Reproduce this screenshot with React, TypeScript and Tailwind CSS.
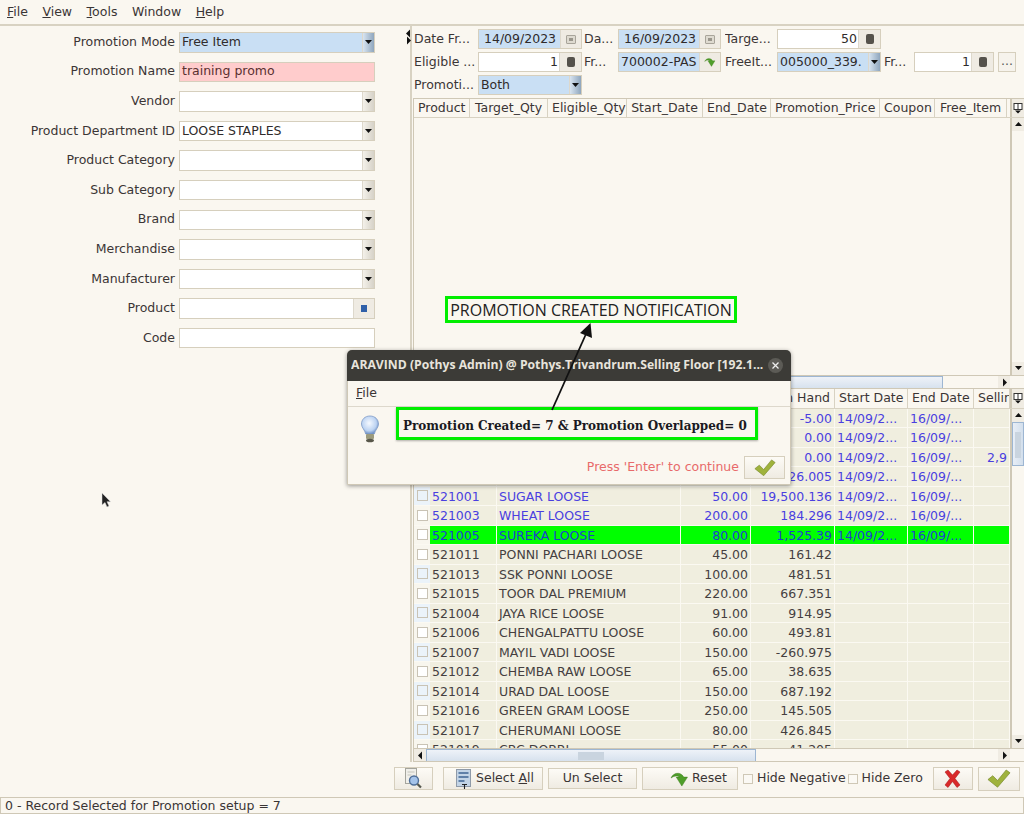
import React from "react";

const font = { fontFamily: '"DejaVu Sans", sans-serif' };

function Caret({ dir = "down" }: { dir?: "down" | "up" | "left" | "right" }) {
  const pts = { down: "1,2 8,2 4.5,6", up: "1,6 8,6 4.5,2", left: "6,0.5 6,8.5 2,4.5", right: "3,0.5 3,8.5 7,4.5" }[dir];
  return (
    <svg width="9" height="9" viewBox="0 0 9 9" className="shrink-0">
      <polygon points={pts} fill="#111" />
    </svg>
  );
}

function Spin() {
  return (
    <div className="w-[22px] h-full shrink-0 bg-[#efebe3] border-l border-[#ddd8cc] flex items-center justify-center">
      <div className="w-[8px] h-[10px] rounded-[2px] bg-[#55524c]" />
    </div>
  );
}

function FormRow({ label, children }: { label: string; children: React.ReactNode }) {
  return (
    <div className="flex items-center h-[20.5px] mb-[9.1px]">
      <div className="w-[175px] text-right text-[#3a3535] whitespace-nowrap">{label}</div>
      <div className="ml-[4px] w-[196px] h-full">{children}</div>
    </div>
  );
}

function Field({ value = "", bg = "bg-white", children, tx = "text-[#2f2b2b]", pad = "pl-[2px]" }: { value?: string; bg?: string; children?: React.ReactNode; tx?: string; pad?: string }) {
  return (
    <div className={`flex h-full border border-[#d6cfbd] ${bg}`}>
      <div className={`flex-1 min-w-0 flex items-center whitespace-nowrap overflow-hidden ${pad} ${tx}`}>{value}</div>
      {children}
    </div>
  );
}

function DropBtn({ blue = false }: { blue?: boolean }) {
  return (
    <div className={`w-[12px] h-full shrink-0 flex items-center justify-center border-l border-[#ddd8cc] ${blue ? "bg-gradient-to-r from-[#d8e4f0] to-[#8fa6bd]" : "bg-gradient-to-r from-[#f4f1ea] to-[#d6d2c8]"}`}>
      <Caret />
    </div>
  );
}

function Combo({ value = "", blue = false }: { value?: string; blue?: boolean }) {
  return (
    <Field value={value} bg={blue ? "bg-[#c9dff4]" : "bg-white"}>
      <DropBtn blue={blue} />
    </Field>
  );
}

const FRow = ({ children }: { children: React.ReactNode }) => (
  <div className="flex items-center h-[20px] mb-[3px]">{children}</div>
);

function TLabel({ w, children }: { w: number; children: React.ReactNode }) {
  return (
    <div className="text-[#3a3535] whitespace-nowrap overflow-hidden shrink-0" style={{ width: w }}>
      {children}
    </div>
  );
}

function Box({ w, children }: { w: number; children: React.ReactNode }) {
  return (
    <div className="h-[20px] shrink-0" style={{ width: w }}>
      {children}
    </div>
  );
}

function CalBtn() {
  return (
    <div className="w-[21px] h-full shrink-0 bg-[#efebe3] border-l border-[#ddd8cc] flex items-center justify-center">
      <div className="w-[10px] h-[9px] rounded-[1px] border border-[#a8a49a] bg-[#dedad0] flex items-center justify-center">
        <div className="w-[4px] h-[3px] bg-[#9a968c]" />
      </div>
    </div>
  );
}

function NumField({ value }: { value: string }) {
  return (
    <div className="flex h-full border border-[#d6cfbd] bg-white">
      <div className="flex-1 text-right pr-[1px] leading-[18px] text-[#2f2b2b]">{value}</div>
      <Spin />
    </div>
  );
}

function Scrollbar({ thumbTop, thumbH, grip = false }: { thumbTop: number; thumbH: number; grip?: boolean }) {
  return (
    <div className="w-[14px] h-full shrink-0 flex flex-col bg-[#faf7f0] border-l-2 border-[#cfc8b6]">
      <div className="h-[13px] flex items-center justify-center bg-[#f0ece3]">
        <Caret dir="up" />
      </div>
      <div className="flex-1 relative">
        {thumbH > 0 && (
          <div
            className="absolute left-0 right-0 bg-gradient-to-r from-[#e8eef6] to-[#d3dfec] border border-[#9db6d2]"
            style={{ top: thumbTop, height: thumbH }}
          >
            {grip && <div className="mx-[2px] mt-[9px] h-[26px] bg-[#c9d4df]" />}
          </div>
        )}
      </div>
      <div className="h-[13px] flex items-center justify-center bg-[#f0ece3]">
        <Caret />
      </div>
    </div>
  );
}

function HScroll({ left, w, grip = false }: { left: number; w: number; grip?: boolean }) {
  return (
    <div className="h-[14px] shrink-0 flex items-stretch bg-[#faf7f0] border-t border-b border-[#cfc8b6]">
      <div className="w-[12px] flex items-center justify-center bg-[#f0ece3]">
        <Caret dir="left" />
      </div>
      <div className="flex-1 relative">
        <div
          className="absolute top-0 bottom-0 bg-gradient-to-b from-[#eef2f8] to-[#d7e2ee] border-x border-[#9db6d2] border-t flex items-center justify-center"
          style={{ left, width: w }}
        >
          {grip && <div className="w-[26px] h-[8px] bg-[#c9d4df]" />}
        </div>
      </div>
      <div className="w-[12px] flex items-center justify-center bg-[#f0ece3]">
        <Caret dir="right" />
      </div>
      <div className="w-[14px] bg-[#faf7f0]" />
    </div>
  );
}

const topCols: [string, number][] = [
  ["Product", 56],
  ["Target_Qty", 78],
  ["Eligible_Qty", 79],
  ["Start_Date", 76],
  ["End_Date", 68],
  ["Promotion_Price", 109],
  ["Coupon", 55],
  ["Free_Item", 72],
];

const cols = [16, 67, 184, 70, 84, 73, 66, 36];
type R = { c?: string; n?: string; p?: string; h: string; b?: boolean; g?: boolean; s?: string; t?: boolean };
const rows: R[] = [
  { h: "-5.00", b: true },
  { h: "0.00", b: true },
  { h: "0.00", b: true, s: "2,9" },
  { h: "26.005", b: true },
  { c: "521001", n: "SUGAR LOOSE", p: "50.00", h: "19,500.136", b: true, t: true },
  { c: "521003", n: "WHEAT LOOSE", p: "200.00", h: "184.296", b: true },
  { c: "521005", n: "SUREKA LOOSE", p: "80.00", h: "1,525.39", b: true, g: true },
  { c: "521011", n: "PONNI PACHARI LOOSE", p: "45.00", h: "161.42" },
  { c: "521013", n: "SSK PONNI LOOSE", p: "100.00", h: "481.51", t: true },
  { c: "521015", n: "TOOR DAL PREMIUM", p: "220.00", h: "667.351" },
  { c: "521004", n: "JAYA RICE LOOSE", p: "91.00", h: "914.95", t: true },
  { c: "521006", n: "CHENGALPATTU LOOSE", p: "60.00", h: "493.81" },
  { c: "521007", n: "MAYIL VADI LOOSE", p: "150.00", h: "-260.975", t: true },
  { c: "521012", n: "CHEMBA RAW LOOSE", p: "65.00", h: "38.635" },
  { c: "521014", n: "URAD DAL LOOSE", p: "150.00", h: "687.192", t: true },
  { c: "521016", n: "GREEN GRAM LOOSE", p: "250.00", h: "145.505" },
  { c: "521017", n: "CHERUMANI LOOSE", p: "80.00", h: "426.845", t: true },
  { c: "521019", n: "CBC DOBBI", p: "55.00", h: "41.205" },
];

function Cell({ w, right, children }: { w: number; right?: boolean; children?: React.ReactNode }) {
  return (
    <div
      className={`shrink-0 h-full border-r border-[#fbf9f2] px-[2px] overflow-hidden whitespace-nowrap leading-[19px] ${right ? "text-right" : ""}`}
      style={{ width: w }}
    >
      {children}
    </div>
  );
}

function Row({ r }: { r: R }) {
  const tx = r.b ? (r.g ? "text-[#1c3fd0]" : "text-[#4a3fe0]") : "text-[#453f3f]";
  return (
    <div className={`flex h-[19.5px] border-b border-[#fbf9f2] ${tx} ${r.g ? "bg-[#00ff00]" : ""}`}>
      <div className={`shrink-0 flex items-center justify-center ${r.t ? "bg-[#ebf3fa]" : "bg-[#f8f6ee]"}`} style={{ width: cols[0] }}>
        <div className={`w-[11px] h-[11px] border border-[#c9c3b5] ${r.t ? "bg-[#ebf3fa]" : "bg-white"}`} />
      </div>
      <Cell w={cols[1]}>{r.c}</Cell>
      <Cell w={cols[2]}>{r.n}</Cell>
      <Cell w={cols[3]} right>{r.p}</Cell>
      <Cell w={cols[4]} right>{r.h}</Cell>
      <Cell w={cols[5]}>{r.b ? "14/09/2..." : ""}</Cell>
      <Cell w={cols[6]}>{r.b ? "16/09/..." : ""}</Cell>
      <Cell w={cols[7]} right>{r.s}</Cell>
    </div>
  );
}

function Head({ w, children, right }: { w: number; children: React.ReactNode; right?: boolean }) {
  return (
    <div
      className={`shrink-0 h-full border-r border-[#d8d2c2] px-[4px] text-[#3a3535] leading-[18px] whitespace-nowrap overflow-hidden ${right ? "text-right" : "text-center"}`}
      style={{ width: w }}
    >
      {children}
    </div>
  );
}

function ColMenu() {
  return (
    <div className="w-[14px] h-full shrink-0 bg-[#f0ece3] border-l-2 border-[#cfc8b6] flex items-center justify-center">
      <svg width="10" height="11" viewBox="0 0 10 11">
        <rect x="1" y="0.5" width="8" height="6" fill="#fff" stroke="#333" />
        <line x1="5" y1="0.5" x2="5" y2="6.5" stroke="#333" />
        <polygon points="2,7.5 8,7.5 5,10.5" fill="#111" />
      </svg>
    </div>
  );
}

function Check({ size = 26 }: { size?: number }) {
  return (
    <svg width={size} height={size * 0.8} viewBox="0 0 25 20">
      <polygon points="1,11 6,7 11,12 20,1 24,4 11,19" fill="#9fb23c" stroke="#76882a" strokeWidth="0.7" />
    </svg>
  );
}

function Btn({ w, children, className = "" }: { w: number; children: React.ReactNode; className?: string }) {
  return (
    <div
      className={`shrink-0 border border-[#d6cfbd] bg-gradient-to-b from-[#fdfbf6] to-[#efebe2] flex items-center text-[#3a3535] ${className}`}
      style={{ width: w }}
    >
      {children}
    </div>
  );
}

function CurvedArrow({ w, h }: { w: number; h: number }) {
  return (
    <svg width={w} height={h} viewBox="0 0 20 17" className="shrink-0">
      <path d="M1 7.500C3 2 11 0 14.500 6.500L18.500 6.500 12.500 16 6.500 6.500 10 6.500C8 4.500 4 5 1 7.500Z" fill="#4f9e2a" stroke="#3a7a1a" strokeWidth="0.500" />
    </svg>
  );
}

function Bulb() {
  return (
    <svg width="20" height="28" viewBox="0 0 20 28">
      <defs>
        <radialGradient id="bulb" cx="45%" cy="40%" r="60%">
          <stop offset="0%" stopColor="#f5f9ff" />
          <stop offset="70%" stopColor="#bcd3f2" />
          <stop offset="100%" stopColor="#6d8fc4" />
        </radialGradient>
      </defs>
      <path d="M10 1C4.8 1 1.5 4.6 1.5 9c0 3.6 3.4 6 4.2 10h8.6c.8-4 4.2-6.4 4.2-10C18.500 4.600 15.200 1 10 1z" fill="url(#bulb)" stroke="#7f9ac6" strokeWidth="0.8" />
      <rect x="6" y="19" width="8" height="5" rx="1" fill="#9b9a7c" />
      <ellipse cx="10" cy="25.500" rx="4" ry="1.800" fill="#57564a" />
    </svg>
  );
}

export default function App() {
  return (
    <div className="relative w-[1024px] h-[814px] overflow-hidden flex flex-col bg-[#faf7f0] text-[12.5px] text-[#3a3535]" style={font}>
      {/* menu */}
      <div className="h-[26px] shrink-0 flex items-center gap-[14.5px] pl-[7px] pt-[1px] border-b-2 border-[#d8d2c2]">
        <span><u>F</u>ile</span>
        <span><u>V</u>iew</span>
        <span><u>T</u>ools</span>
        <span>Window</span>
        <span><u>H</u>elp</span>
      </div>

      <div className="flex flex-1 min-h-0">
        {/* left form */}
        <div className="w-[412px] shrink-0 pt-[6px] border-r-2 border-[#d8d2c2] relative">
          <FormRow label="Promotion Mode"><Combo value="Free Item" blue /></FormRow>
          <FormRow label="Promotion Name"><Field value="training promo" bg="bg-[#ffcccc]" tx="text-[#5a3030]" /></FormRow>
          <FormRow label="Vendor"><Combo /></FormRow>
          <FormRow label="Product Department ID"><Combo value="LOOSE STAPLES" /></FormRow>
          <FormRow label="Product Category"><Combo /></FormRow>
          <FormRow label="Sub Category"><Combo /></FormRow>
          <FormRow label="Brand"><Combo /></FormRow>
          <FormRow label="Merchandise"><Combo /></FormRow>
          <FormRow label="Manufacturer"><Combo /></FormRow>
          <FormRow label="Product">
            <Field>
              <div className="w-[21px] h-full shrink-0 bg-[#efebe3] border-l border-[#ddd8cc] flex items-center justify-center">
                <div className="w-[6px] h-[7px] bg-[#2f5fa8]" />
              </div>
            </Field>
          </FormRow>
          <FormRow label="Code"><Field /></FormRow>
          <div className="absolute right-[-3px] top-[3px]">
            <div className="-mb-[2px]"><Caret dir="left" /></div>
            <Caret dir="right" />
          </div>
        </div>

        {/* right */}
        <div className="flex-1 min-w-0 flex flex-col pl-px">
          <div className="pt-[3px] pl-[1px] h-[72px] shrink-0">
            <FRow>
              <TLabel w={64}>Date Fr...</TLabel>
              <Box w={104}><Field value="14/09/2023" bg="bg-[#c9dff4]" pad="pl-[5px]"><CalBtn /></Field></Box>
              <div className="w-[2px] shrink-0" />
              <TLabel w={32}>Da...</TLabel>
              <div className="w-[2px] shrink-0" />
              <Box w={103}><Field value="16/09/2023" bg="bg-[#c9dff4]" pad="pl-[5px]"><CalBtn /></Field></Box>
              <div className="w-[4px] shrink-0" />
              <TLabel w={52}>Targe...</TLabel>
              <Box w={104}><NumField value="50" /></Box>
            </FRow>
            <FRow>
              <TLabel w={64}>Eligible ...</TLabel>
              <Box w={104}><NumField value="1" /></Box>
              <div className="w-[2px] shrink-0" />
              <TLabel w={32}>Fr...</TLabel>
              <div className="w-[2px] shrink-0" />
              <Box w={103}>
                <Field value="700002-PAS" bg="bg-[#c9dff4]" pad="pl-[2px]">
                  <div className="w-[21px] h-full shrink-0 bg-[#efebe3] border-l border-[#ddd8cc] flex items-center justify-center">
                    <CurvedArrow w={12} h={10} />
                  </div>
                </Field>
              </Box>
              <div className="w-[4px] shrink-0" />
              <TLabel w={52}>FreeIt...</TLabel>
              <Box w={104}><Combo value="005000_339." blue /></Box>
              <div className="w-[3px] shrink-0" />
              <TLabel w={30}>Fr...</TLabel>
              <Box w={80}><NumField value="1" /></Box>
              <div className="w-[4px] shrink-0" />
              <Box w={18}>
                <div className="h-full border border-[#d6cfbd] bg-[#f6f3ec] text-center leading-[15px] text-[#555]">...</div>
              </Box>
            </FRow>
            <FRow>
              <TLabel w={64}>Promoti...</TLabel>
              <Box w={104}><Combo value="Both" blue /></Box>
            </FRow>
          </div>

          {/* top table */}
          <div className="h-[291px] shrink-0 flex flex-col border-l border-t border-[#cfc8b6]">
            <div className="flex h-[19px] shrink-0 border-b border-[#d8d2c2]">
              {topCols.map(([t, w]) => (
                <Head key={t} w={w}>{t}</Head>
              ))}
              <div className="flex-1" />
              <ColMenu />
            </div>
            <div className="flex-1 flex justify-end min-h-0">
              <Scrollbar thumbTop={0} thumbH={0} />
            </div>
            <HScroll left={0} w={517} />
          </div>

          {/* bottom table */}
          <div className="flex-1 min-h-0 flex flex-col border-l border-[#cfc8b6]">
            <div className="flex h-[19.5px] shrink-0 border-b border-[#d8d2c2]">
              <Head w={cols[0]}>{""}</Head>
              <Head w={cols[1]}>{""}</Head>
              <Head w={cols[2]}>{""}</Head>
              <Head w={cols[3]}>{""}</Head>
              <Head w={cols[4]} right>On Hand</Head>
              <Head w={cols[5]}>Start Date</Head>
              <Head w={cols[6]}>End Date</Head>
              <Head w={cols[7]}>Selling Price</Head>
              <ColMenu />
            </div>
            <div className="flex-1 min-h-0 flex">
              <div className="flex-1 min-w-0 overflow-hidden bg-[#f0eedf]">
                {rows.map((r, i) => (
                  <Row key={i} r={r} />
                ))}
              </div>
              <Scrollbar thumbTop={0} thumbH={44} grip />
            </div>
            <HScroll left={0} w={330} grip />
          </div>
        </div>
      </div>

      {/* toolbar */}
      <div className="h-[35px] shrink-0 flex items-start pt-[5px] pl-[394px] text-[#3a3535]">
        <Btn w={39} className="h-[23px] justify-center">
          <svg width="17" height="21" viewBox="0 0 17 21">
            <rect x="0.500" y="0.500" width="11" height="15" fill="#f0efea" stroke="#a5a59d" />
            <path d="M2.500 4h7M2.500 7h4" stroke="#c4c4bc" />
            <circle cx="9" cy="12.500" r="4.500" fill="#a4c3ea" stroke="#4f6f99" strokeWidth="1.400" />
            <line x1="12.500" y1="16" x2="16" y2="19.500" stroke="#55584f" strokeWidth="2.200" />
          </svg>
        </Btn>
        <Btn w={100} className="ml-[10px] h-[23px] pl-[12px] gap-[5px]">
          <svg width="15" height="20" viewBox="0 0 15 20" className="shrink-0">
            <rect x="0.500" y="0.500" width="14" height="17" fill="#c3d4e6" stroke="#8f9aa8" />
            <rect x="2.500" y="3" width="10" height="2" fill="#5f80a8" />
            <rect x="2.500" y="7" width="10" height="2" fill="#5f80a8" />
            <rect x="2.500" y="11" width="6" height="2" fill="#5f80a8" />
            <path d="M6 15.500h5M8.500 15.500v4.500" stroke="#222" strokeWidth="1.100" />
          </svg>
          <span className="whitespace-nowrap">Select <u>A</u>ll</span>
        </Btn>
        <Btn w={89} className="ml-[5px] h-[21px] mt-[1px] justify-center">Un Select</Btn>
        <Btn w={96} className="ml-[5px] h-[23px] pl-[27px] gap-[3px]">
          <CurvedArrow w={19} h={16} />
          <span>Reset</span>
        </Btn>
        <div className="ml-[5px] h-[23px] flex items-center gap-[4px] whitespace-nowrap">
          <div className="w-[10px] h-[10px] border border-[#cfc8b6] bg-[#fbf9f4]" />
          <span>Hide Negative</span>
        </div>
        <div className="ml-[2px] h-[23px] flex items-center gap-[4px] whitespace-nowrap">
          <div className="w-[10px] h-[10px] border border-[#cfc8b6] bg-[#fbf9f4]" />
          <span>Hide Zero</span>
        </div>
        <Btn w={40} className="ml-[10px] h-[23px] justify-center">
          <svg width="17" height="19" viewBox="0 0 17 19">
            <path d="M1 3l3-2 4.500 5L13 1l3 2-5 6.500L16 16l-3 2.500-4.500-6L4 18.500 1 16l5-6.500z" fill="#d92a2a" stroke="#a51515" strokeWidth="0.500" />
          </svg>
        </Btn>
        <Btn w={42} className="ml-[5px] h-[24px] justify-center"><Check size={24} /></Btn>
      </div>

      {/* status */}
      <div className="h-[17px] shrink-0 border border-[#cfc8b6] pl-[4px] leading-[15px] text-[#3a3535] whitespace-nowrap">
        0 - Record Selected for Promotion setup = 7
      </div>

      {/* dialog */}
      <div className="absolute left-[347px] top-[350px] w-[444px] h-[135px] bg-[#faf7f0] rounded-t-[5px] border border-[#cfc8b6] shadow-[0_1px_4px_rgba(0,0,0,0.4)] flex flex-col">
        <div className="h-[31px] shrink-0 -mx-px -mt-px bg-[#3c3b37] rounded-t-[5px] flex items-center pl-[4px] pr-[8px] text-[#e8e4dc] font-bold text-[12.2px] whitespace-nowrap" style={{ fontFamily: '"Open Sans", sans-serif' }}>
          <span className="flex-1 min-w-0 overflow-hidden">ARAVIND (Pothys Admin) @ Pothys.Trivandrum.Selling Floor [192.1...</span>
          <div className="w-[15px] h-[15px] shrink-0 rounded-full bg-[#5c5b56] flex items-center justify-center">
            <svg width="7" height="7" viewBox="0 0 7 7"><path d="M0.500 0.500L6.500 6.500M6.500 0.500L0.500 6.500" stroke="#eee" strokeWidth="1.300" /></svg>
          </div>
        </div>
        <div className="h-[26px] shrink-0 border-b border-[#ddd8cc] pl-[8px] flex items-center"><span><u>F</u>ile</span></div>
        <div className="flex-1 relative">
          <div className="absolute left-[12px] top-[8px]"><Bulb /></div>
          <div className="absolute right-[5px] bottom-[5px] flex items-center gap-[5px]">
            <span className="text-[#e86a6a]">Press 'Enter' to continue</span>
            <Btn w={41} className="h-[23px] justify-center"><Check size={22} /></Btn>
          </div>
        </div>
      </div>

      {/* annotations */}
      <div className="absolute left-[396px] top-[407px] w-[362px] h-[33px] border-[3px] border-[#00ee00] bg-[#faf7f0] flex items-center pl-[4px] pt-[4px] font-bold text-[12px] text-[#1a1a22] whitespace-nowrap shadow-[0_1px_2px_rgba(0,0,0,0.3)]" style={{ fontFamily: '"DejaVu Serif", serif' }}>
        Promotion Created= 7 &amp; Promotion Overlapped= 0
      </div>
      <div className="absolute left-[445px] top-[296px] w-[292px] h-[27px] border-[3px] border-[#00ee00] bg-[#faf7f0] flex items-center justify-center pt-[1px] text-[16px] text-[#222] whitespace-nowrap" style={{ fontFamily: '"Open Sans", sans-serif' }}>
        PROMOTION CREATED NOTIFICATION
      </div>
      <svg className="absolute left-[540px] top-[320px]" width="55" height="95" viewBox="0 0 55 95">
        <line x1="12" y1="90" x2="46" y2="14" stroke="#111" strokeWidth="1.800" />
        <polygon points="50.500,3 52,18 40,13" fill="#111" />
      </svg>

      {/* cursor */}
      <svg className="absolute left-[101px] top-[492px]" width="11" height="17" viewBox="0 0 11 17">
        <path d="M1 1v12l3-2.500 2 4.500 2-1-2-4.300h3.500z" fill="#222" stroke="#ddd" strokeWidth="0.500" />
      </svg>
    </div>
  );
}
